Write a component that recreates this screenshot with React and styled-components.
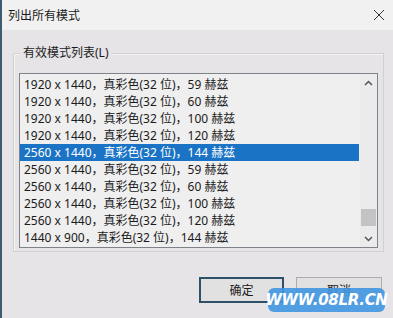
import React from 'react';
import styled, { createGlobalStyle } from 'styled-components';

const GlobalStyle = createGlobalStyle`
  html, body {
    margin: 0;
    padding: 0;
    background: #e6e4e6;
  }
  * { box-sizing: border-box; }
`;

const FONT = `"Noto Sans", "Noto Sans CJK SC", sans-serif`;

const Window = styled.div`
  position: relative;
  width: 393px;
  height: 318px;
  display: flex;
  flex-direction: column;
  border-left: 2px solid #3e5b70;
  font-family: ${FONT};
  color: #1b1b1b;
  overflow: hidden;
`;

const TitleBar = styled.div`
  height: 30px;
  background: #f1f1f1;
  display: flex;
  align-items: center;
  justify-content: space-between;
  padding: 0 4px 0 6px;
  font-size: 12px;
`;

const Close = styled.div`
  width: 20px;
  height: 20px;
  display: flex;
  align-items: center;
  justify-content: center;
`;

const Body = styled.div`
  flex: 1;
  background: #e6e4e6;
  padding: 23px 9px 0 11px;
  display: flex;
  flex-direction: column;
`;

const Group = styled.fieldset`
  margin: 0;
  height: 199px;
  padding: 0 5px 0 5px;
  border: 1px solid #d2d0d2;
  box-shadow: inset 1px 1px 0 #f4f4f4;
  position: relative;
  display: flex;
  flex-direction: column;
`;

const Legend = styled.div`
  position: absolute;
  top: -9px;
  left: 6px;
  padding: 0 3px;
  background: #e6e4e6;
  font-size: 12px;
  line-height: 16px;
`;

const ListBox = styled.div`
  margin-top: 19px;
  height: 175px;
  border: 1px solid #7f8389;
  background: #efefef;
  display: flex;
`;

const Rows = styled.div`
  flex: 1;
  padding: 2px 1px 0 0;
  display: flex;
  flex-direction: column;
`;

const Row = styled.div`
  height: 17px;
  line-height: 17px;
  font-size: 12px;
  padding-left: 4px;
  white-space: nowrap;
  background: ${p => (p.selected ? '#1a73c4' : 'transparent')};
  color: ${p => (p.selected ? '#ffffff' : '#1b1b1b')};
`;

const ScrollBar = styled.div`
  width: 17px;
  background: #ebebeb;
  display: flex;
  flex-direction: column;
  align-items: center;
`;

const Arrow = styled.div`
  height: 17px;
  width: 17px;
  display: flex;
  align-items: center;
  justify-content: center;
`;

const Track = styled.div`
  flex: 1;
  width: 100%;
  display: flex;
  flex-direction: column;
  justify-content: flex-end;
  align-items: center;
  padding-bottom: 4px;
`;

const Thumb = styled.div`
  width: 15px;
  height: 17px;
  background: #c3c3c3;
`;

const Buttons = styled.div`
  display: flex;
  justify-content: flex-end;
  gap: 12px;
  margin-top: 25px;
  padding-right: 2px;
`;

const Button = styled.div`
  width: ${p => (p.primary ? 85 : 86)}px;
  height: 26px;
  display: flex;
  align-items: center;
  justify-content: center;
  font-size: 12px;
  background: #e1e1e1;
  border: ${p => (p.primary ? '2px solid #2e5068' : '1px solid #adadad')};
`;

const Watermark = styled.div`
  position: absolute;
  left: 266px;
  top: 288px;
  width: 117px;
  height: 24px;
  border-radius: 6px;
  background: rgba(64, 150, 226, 0.9);
  color: #ffffff;
  font-family: "DejaVu Sans", sans-serif;
  font-weight: bold;
  font-style: italic;
  font-size: 15px;
  letter-spacing: -0.3px;
  display: flex;
  align-items: center;
  justify-content: center;
`;

const modes = [
  '1920 x 1440，真彩色(32 位)，59 赫兹',
  '1920 x 1440，真彩色(32 位)，60 赫兹',
  '1920 x 1440，真彩色(32 位)，100 赫兹',
  '1920 x 1440，真彩色(32 位)，120 赫兹',
  '2560 x 1440，真彩色(32 位)，144 赫兹',
  '2560 x 1440，真彩色(32 位)，59 赫兹',
  '2560 x 1440，真彩色(32 位)，60 赫兹',
  '2560 x 1440，真彩色(32 位)，100 赫兹',
  '2560 x 1440，真彩色(32 位)，120 赫兹',
  '1440 x 900，真彩色(32 位)，144 赫兹',
];

export default function App() {
  return (
    <>
      <GlobalStyle />
      <Window>
        <TitleBar>
          <span>列出所有模式</span>
          <Close>
            <svg width="12" height="12" viewBox="0 0 12 12">
              <path d="M1 1 L11 11 M11 1 L1 11" stroke="#333" strokeWidth="1" />
            </svg>
          </Close>
        </TitleBar>
        <Body>
          <Group>
            <Legend>有效模式列表(L)</Legend>
            <ListBox>
              <Rows>
                {modes.map((m, i) => (
                  <Row key={i} selected={i === 4}>{m}</Row>
                ))}
              </Rows>
              <ScrollBar>
                <Arrow>
                  <svg width="9" height="6" viewBox="0 0 9 6">
                    <path d="M1 5 L4.5 1.5 L8 5" stroke="#555" strokeWidth="1.5" fill="none" />
                  </svg>
                </Arrow>
                <Track>
                  <Thumb />
                </Track>
                <Arrow>
                  <svg width="9" height="6" viewBox="0 0 9 6">
                    <path d="M1 1 L4.5 4.5 L8 1" stroke="#555" strokeWidth="1.5" fill="none" />
                  </svg>
                </Arrow>
              </ScrollBar>
            </ListBox>
          </Group>
          <Buttons>
            <Button primary>确定</Button>
            <Button>取消</Button>
          </Buttons>
        </Body>
        <Watermark>WWW.08LR.CN</Watermark>
      </Window>
    </>
  );
}
